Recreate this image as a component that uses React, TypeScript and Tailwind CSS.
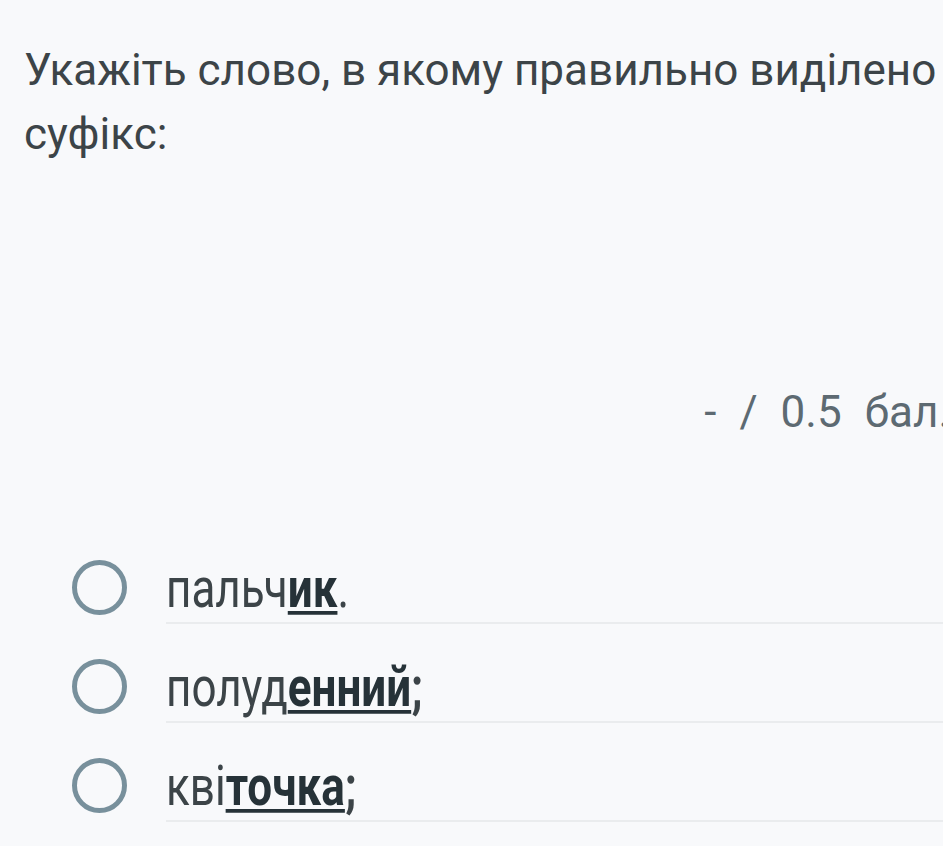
const options = [
  { base: "пальч", suffix: "ик", tail: "." },
  { base: "полуд", suffix: "енний", tail: ";" },
  { base: "кві", suffix: "точка", tail: ";" },
];

export default function App() {
  return (
    <div className="min-h-[846px] w-[943px] overflow-hidden bg-[#f8f9fb] font-['Roboto',sans-serif] text-[#3c4448]">
      <div className="w-[1000px]">
        <div className="pl-[24px] pt-[38px] text-[44px] leading-[64px]">
          Укажіть слово, в якому правильно виділено
          <br />
          суфікс:
        </div>

        <div className="mt-[221px] flex h-[50px] items-center justify-end gap-[23px] pr-[50px] text-[44px] leading-[50px] text-[#5d6a72]">
          <span>-</span>
          <span>/</span>
          <span>0.5</span>
          <span>бал.</span>
        </div>

        <div className="mt-[88px]">
          {options.map((o) => (
            <div key={o.base} className="flex items-end">
              <div className="mb-[9px] ml-[72px] mr-[39px] h-[55px] w-[55px] shrink-0 rounded-full border-[5px] border-[#78909c]" />
              <div className="flex h-[99px] flex-1 items-end border-b-[2px] border-[#eaecee] pb-[1px] text-[44px] leading-[52px]">
                <span className="inline-block origin-bottom scale-y-[1.25]">
                  {o.base}
                  <span className="font-bold text-[#263238] underline decoration-[3px] underline-offset-[3px]">
                    {o.suffix}
                  </span>
                  <span className="font-bold">{o.tail === ";" ? ";" : ""}</span>
                  {o.tail === "." ? "." : ""}
                </span>
              </div>
            </div>
          ))}
        </div>
      </div>
    </div>
  );
}
